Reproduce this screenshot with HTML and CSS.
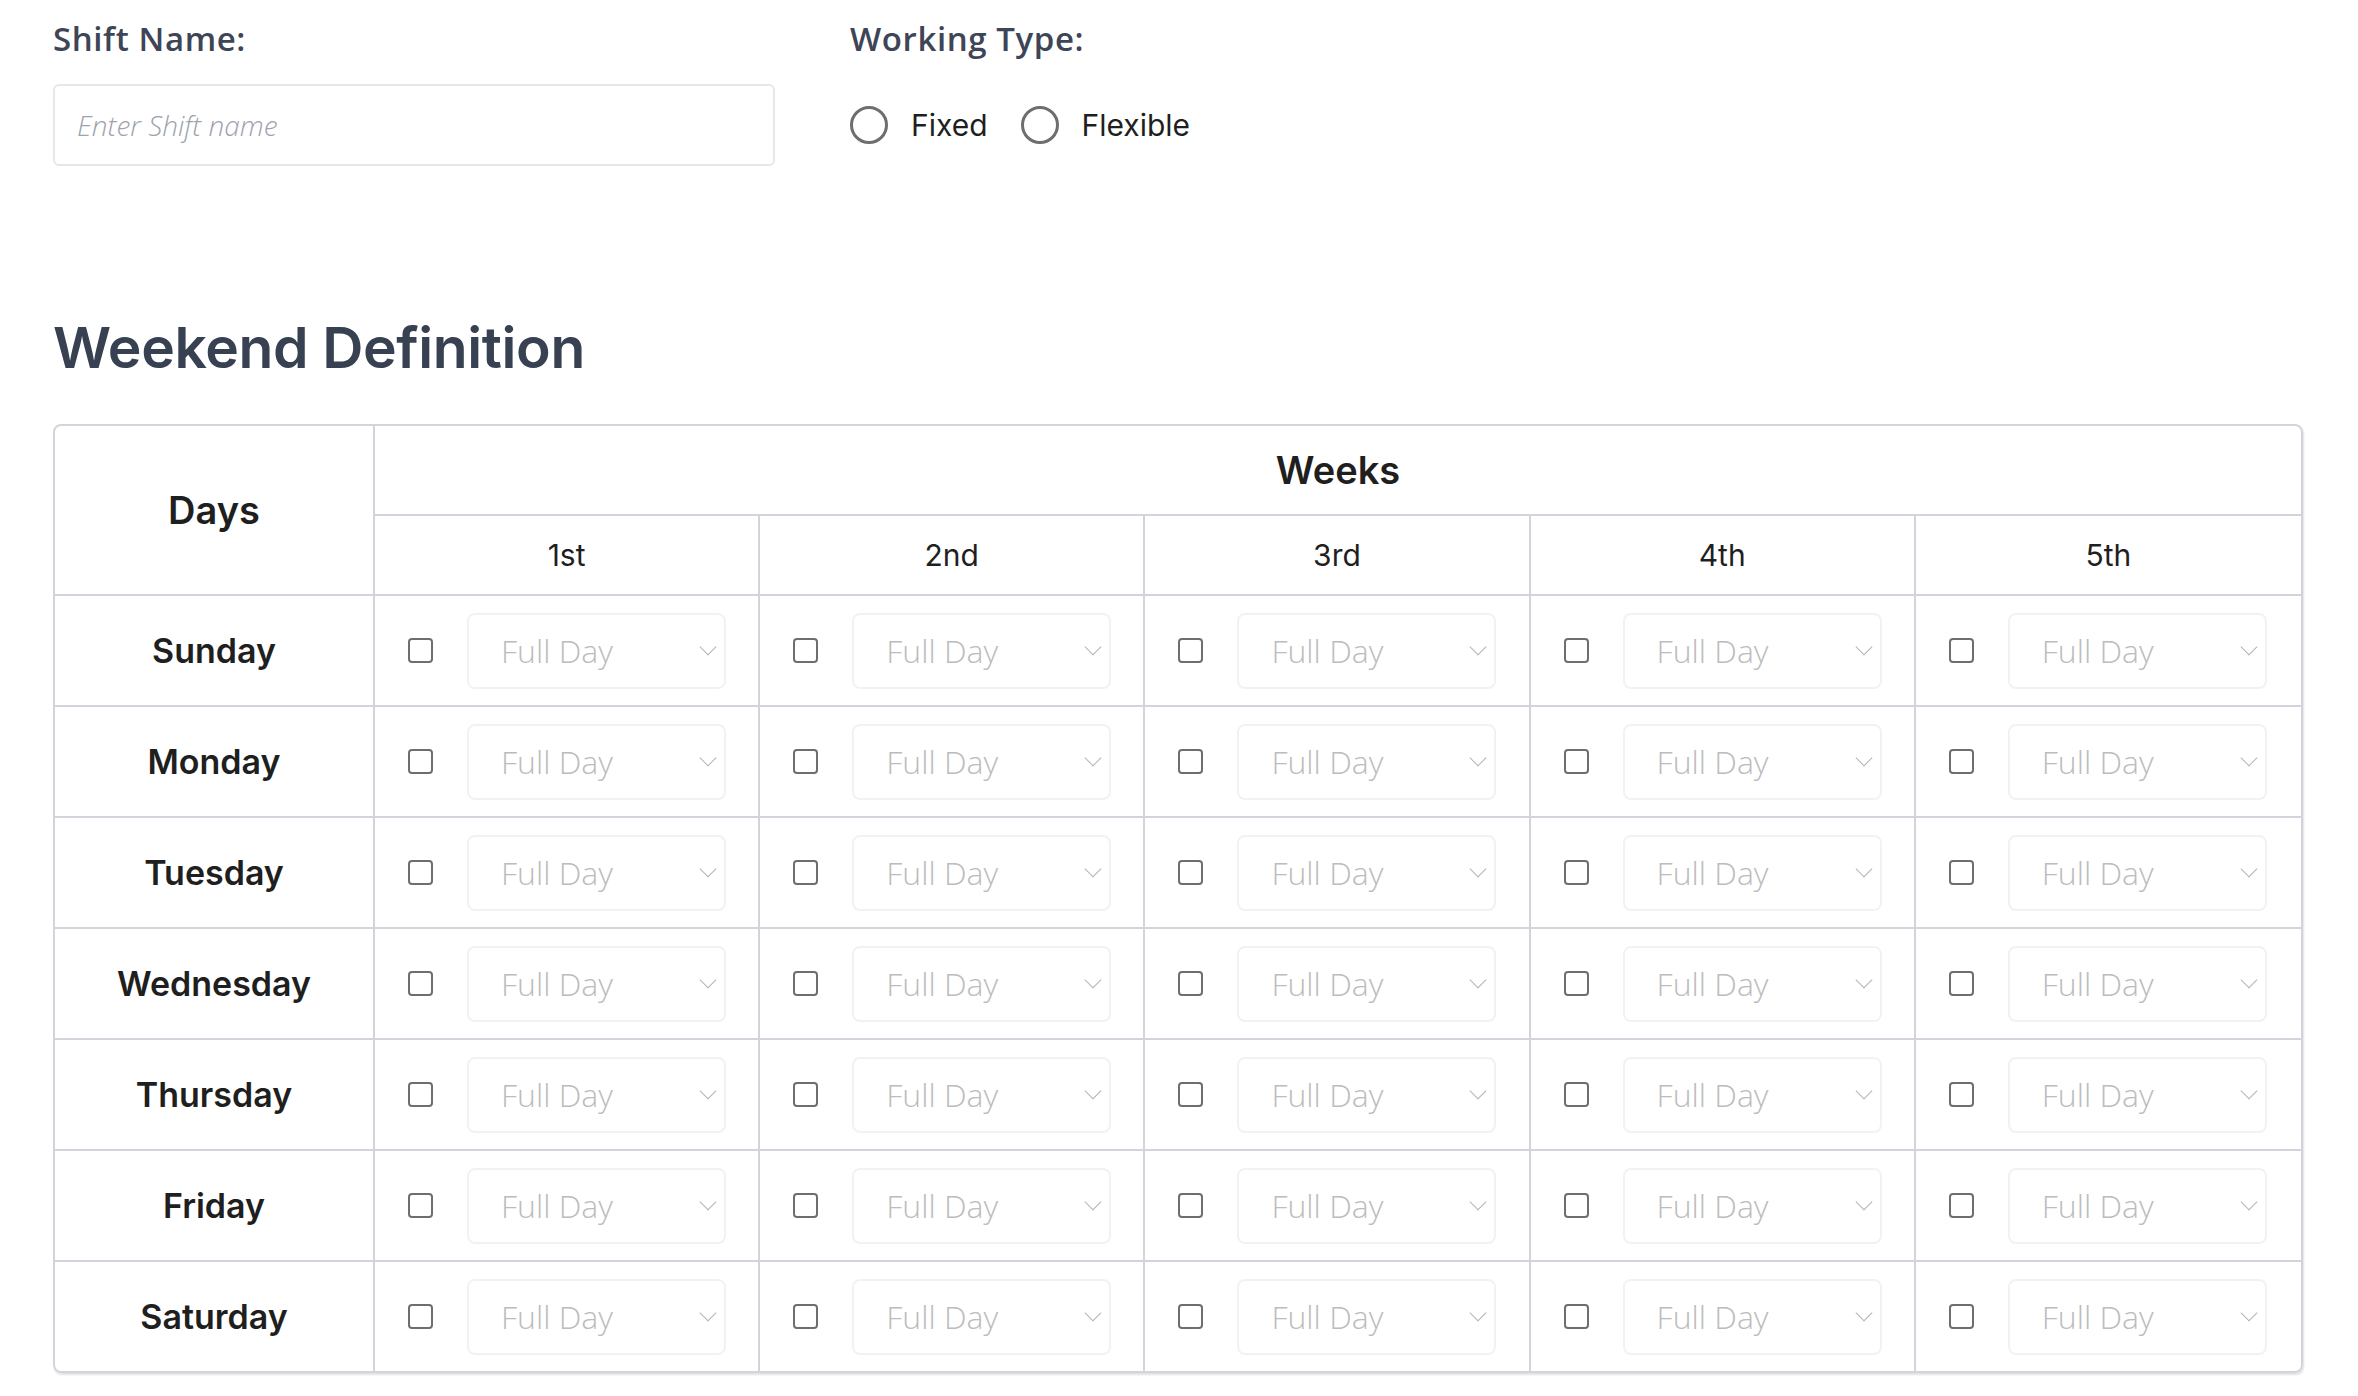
FILE: index.html
```html
<!DOCTYPE html>
<html lang="en">
<head>
    <meta charset="UTF-8">
    <meta name="viewport" content="width=device-width, initial-scale=1.0">
    <title>Shift Setup</title>
    <link rel="stylesheet" href="styles.css">
</head>
<body>
    <div class="page">
        <!-- Shift name and working type -->
        <div class="shift-fields">
            <div class="field">
                <label class="field-label" for="shiftName">Shift Name:</label>
                <input type="text" id="shiftName" class="shift-input" placeholder="Enter Shift name">
            </div>
            <div class="field">
                <span class="field-label">Working Type:</span>
                <div class="radio-group">
                    <label class="radio-option"><input type="radio" name="workingType" value="fixed">Fixed</label>
                    <label class="radio-option"><input type="radio" name="workingType" value="flexible">Flexible</label>
                </div>
            </div>
        </div>

        <h2 class="section-title">Weekend Definition</h2>

        <!-- Weekend grid: one row per day, one column per week of the month -->
        <div class="schedule">
            <table>
                <colgroup>
                    <col class="days-col">
                    <col><col><col><col><col>
                </colgroup>
                <thead>
                    <tr class="weeks-head">
                        <th rowspan="2" class="days-head">Days</th>
                        <th colspan="5">Weeks</th>
                    </tr>
                    <tr class="week-nums">
                        <th>1st</th><th>2nd</th><th>3rd</th><th>4th</th><th>5th</th>
                    </tr>
                </thead>
                <tbody>
                    <tr>
                        <th class="day-name">Sunday</th>
                        <td><div class="slot"><input type="checkbox"><span class="picker"><select><option>Full Day</option><option>Half Day</option></select></span></div></td>
                        <td><div class="slot"><input type="checkbox"><span class="picker"><select><option>Full Day</option><option>Half Day</option></select></span></div></td>
                        <td><div class="slot"><input type="checkbox"><span class="picker"><select><option>Full Day</option><option>Half Day</option></select></span></div></td>
                        <td><div class="slot"><input type="checkbox"><span class="picker"><select><option>Full Day</option><option>Half Day</option></select></span></div></td>
                        <td><div class="slot"><input type="checkbox"><span class="picker"><select><option>Full Day</option><option>Half Day</option></select></span></div></td>
                    </tr>
                    <tr>
                        <th class="day-name">Monday</th>
                        <td><div class="slot"><input type="checkbox"><span class="picker"><select><option>Full Day</option><option>Half Day</option></select></span></div></td>
                        <td><div class="slot"><input type="checkbox"><span class="picker"><select><option>Full Day</option><option>Half Day</option></select></span></div></td>
                        <td><div class="slot"><input type="checkbox"><span class="picker"><select><option>Full Day</option><option>Half Day</option></select></span></div></td>
                        <td><div class="slot"><input type="checkbox"><span class="picker"><select><option>Full Day</option><option>Half Day</option></select></span></div></td>
                        <td><div class="slot"><input type="checkbox"><span class="picker"><select><option>Full Day</option><option>Half Day</option></select></span></div></td>
                    </tr>
                    <tr>
                        <th class="day-name">Tuesday</th>
                        <td><div class="slot"><input type="checkbox"><span class="picker"><select><option>Full Day</option><option>Half Day</option></select></span></div></td>
                        <td><div class="slot"><input type="checkbox"><span class="picker"><select><option>Full Day</option><option>Half Day</option></select></span></div></td>
                        <td><div class="slot"><input type="checkbox"><span class="picker"><select><option>Full Day</option><option>Half Day</option></select></span></div></td>
                        <td><div class="slot"><input type="checkbox"><span class="picker"><select><option>Full Day</option><option>Half Day</option></select></span></div></td>
                        <td><div class="slot"><input type="checkbox"><span class="picker"><select><option>Full Day</option><option>Half Day</option></select></span></div></td>
                    </tr>
                    <tr>
                        <th class="day-name">Wednesday</th>
                        <td><div class="slot"><input type="checkbox"><span class="picker"><select><option>Full Day</option><option>Half Day</option></select></span></div></td>
                        <td><div class="slot"><input type="checkbox"><span class="picker"><select><option>Full Day</option><option>Half Day</option></select></span></div></td>
                        <td><div class="slot"><input type="checkbox"><span class="picker"><select><option>Full Day</option><option>Half Day</option></select></span></div></td>
                        <td><div class="slot"><input type="checkbox"><span class="picker"><select><option>Full Day</option><option>Half Day</option></select></span></div></td>
                        <td><div class="slot"><input type="checkbox"><span class="picker"><select><option>Full Day</option><option>Half Day</option></select></span></div></td>
                    </tr>
                    <tr>
                        <th class="day-name">Thursday</th>
                        <td><div class="slot"><input type="checkbox"><span class="picker"><select><option>Full Day</option><option>Half Day</option></select></span></div></td>
                        <td><div class="slot"><input type="checkbox"><span class="picker"><select><option>Full Day</option><option>Half Day</option></select></span></div></td>
                        <td><div class="slot"><input type="checkbox"><span class="picker"><select><option>Full Day</option><option>Half Day</option></select></span></div></td>
                        <td><div class="slot"><input type="checkbox"><span class="picker"><select><option>Full Day</option><option>Half Day</option></select></span></div></td>
                        <td><div class="slot"><input type="checkbox"><span class="picker"><select><option>Full Day</option><option>Half Day</option></select></span></div></td>
                    </tr>
                    <tr>
                        <th class="day-name">Friday</th>
                        <td><div class="slot"><input type="checkbox"><span class="picker"><select><option>Full Day</option><option>Half Day</option></select></span></div></td>
                        <td><div class="slot"><input type="checkbox"><span class="picker"><select><option>Full Day</option><option>Half Day</option></select></span></div></td>
                        <td><div class="slot"><input type="checkbox"><span class="picker"><select><option>Full Day</option><option>Half Day</option></select></span></div></td>
                        <td><div class="slot"><input type="checkbox"><span class="picker"><select><option>Full Day</option><option>Half Day</option></select></span></div></td>
                        <td><div class="slot"><input type="checkbox"><span class="picker"><select><option>Full Day</option><option>Half Day</option></select></span></div></td>
                    </tr>
                    <tr>
                        <th class="day-name">Saturday</th>
                        <td><div class="slot"><input type="checkbox"><span class="picker"><select><option>Full Day</option><option>Half Day</option></select></span></div></td>
                        <td><div class="slot"><input type="checkbox"><span class="picker"><select><option>Full Day</option><option>Half Day</option></select></span></div></td>
                        <td><div class="slot"><input type="checkbox"><span class="picker"><select><option>Full Day</option><option>Half Day</option></select></span></div></td>
                        <td><div class="slot"><input type="checkbox"><span class="picker"><select><option>Full Day</option><option>Half Day</option></select></span></div></td>
                        <td><div class="slot"><input type="checkbox"><span class="picker"><select><option>Full Day</option><option>Half Day</option></select></span></div></td>
                    </tr>
                </tbody>
            </table>
        </div>
    </div>
</body>
</html>
```

FILE: styles.css
```css
body {
    margin: 0;
    background: #fff;
    font-family: Inter, "Noto Sans", sans-serif;
}

.page {
    padding: 22px 55px 40px 53px;
}

/* top form */
.shift-fields {
    display: flex;
    gap: 75px;
}

.field-label {
    display: block;
    font: 600 33px/33px "Open Sans", sans-serif;
    letter-spacing: 0.6px;
    color: #3d4556;
    margin-bottom: 29px;
}

.shift-input {
    display: block;
    width: 722px;
    height: 82px;
    box-sizing: border-box;
    border: 2px solid #e5e7eb;
    border-radius: 6px;
    padding: 0 22px;
    font: italic 300 28px "Open Sans", sans-serif;
    color: #374151;
    outline: none;
}

.shift-input::placeholder {
    color: #9ea3ad;
}

.radio-group {
    display: flex;
    align-items: center;
    height: 82px;
}

.radio-option {
    display: flex;
    align-items: center;
    gap: 23px;
    margin-right: 33px;
    font: 400 30px Inter, sans-serif;
    color: #1f1f1f;
}

.radio-option input {
    appearance: none;
    width: 38px;
    height: 38px;
    margin: 0;
    border: 3px solid #6e6e6e;
    border-radius: 50%;
}

.section-title {
    font: 600 57px/58px Inter, sans-serif;
    letter-spacing: -0.4px;
    color: #374151;
    margin: 153px 0 47px;
}

/* weekend table */
.schedule {
    border: 2px solid #d1d5db;
    border-radius: 8px;
    overflow: hidden;
    box-shadow: 1px 2px 2px rgba(0, 0, 0, 0.12);
}

.schedule table {
    width: 100%;
    border-collapse: separate;
    border-spacing: 0;
    table-layout: fixed;
}

.days-col {
    width: 320px;
}

.schedule th,
.schedule td {
    padding: 0;
    border-right: 2px solid #d1d5db;
    border-bottom: 2px solid #d1d5db;
    text-align: center;
    vertical-align: middle;
    color: #1f1f1f;
}

.schedule th:last-child,
.schedule td:last-child {
    border-right: none;
}

.schedule tbody tr:last-child th,
.schedule tbody tr:last-child td {
    border-bottom: none;
}

.schedule .days-head {
    border-right: 2px solid #d1d5db;
}

.weeks-head th {
    font: 600 38px/88px Inter, sans-serif;
}

.week-nums th {
    font: 400 30px/78px Inter, sans-serif;
}

.day-name {
    font: 600 34px Inter, sans-serif;
}

.slot {
    display: flex;
    align-items: center;
    gap: 34px;
    height: 109px;
    padding: 0 34px 0 33px;
}

.slot input[type="checkbox"] {
    appearance: none;
    flex: none;
    width: 25px;
    height: 25px;
    margin: 0;
    border: 2px solid #6e6e6e;
    border-radius: 4px;
}

.picker {
    position: relative;
    display: block;
    flex: none;
}

.picker select {
    appearance: none;
    display: block;
    width: 259px;
    height: 76px;
    box-sizing: border-box;
    border: 2px solid #f2f2f4;
    border-radius: 8px;
    background: #fff;
    padding: 0 0 0 32px;
    font: 300 32px "Open Sans", sans-serif;
    color: #bcbcbc;
    outline: none;
}

/* chevron drawn over the select */
.picker::after {
    content: "";
    position: absolute;
    right: 12px;
    top: 50%;
    width: 11px;
    height: 11px;
    margin-top: -10px;
    border-right: 1.5px solid #b4b4b4;
    border-bottom: 1.5px solid #b4b4b4;
    transform: rotate(45deg);
    pointer-events: none;
}
```
